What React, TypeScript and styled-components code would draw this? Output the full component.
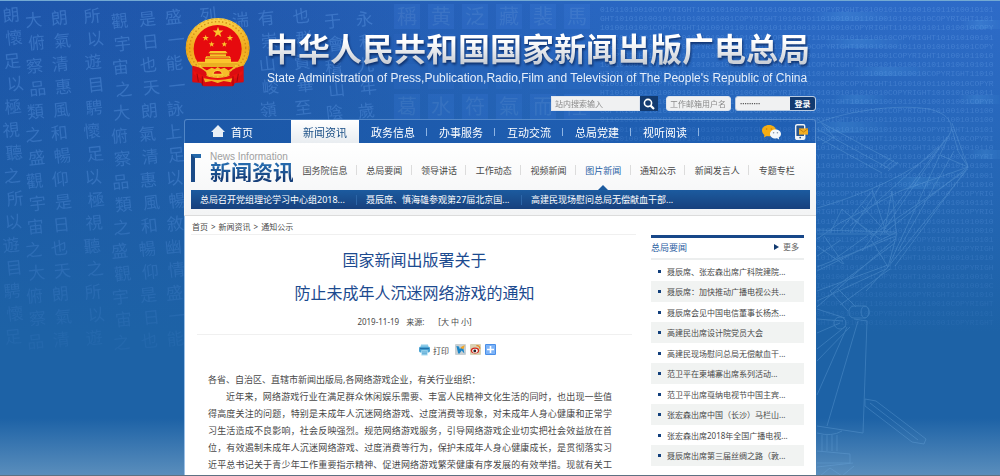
import React from "react";
import styled, { createGlobalStyle, css } from "styled-components";

const GlobalStyle = createGlobalStyle`
  * { box-sizing: border-box; }
  body {
    margin: 0;
    font-family: "Noto Sans", "Noto Sans CJK SC", sans-serif;
    font-size: 9px;
    color: #484848;
  }
  a { color: inherit; text-decoration: none; }
  ul { list-style: none; margin: 0; padding: 0; }
  h1, h2, p { margin: 0; font-weight: 400; }
  button, input { font-family: inherit; margin: 0; }
`;

const Page = styled.div`
  position: relative;
  min-height: 100vh;
  display: flex;
  flex-direction: column;
  border-top: 1px solid #73a9d3;
  border-bottom: 1px solid #5d7183;
  background:
    linear-gradient(to bottom, transparent 88%, rgba(150, 185, 210, 0.5) 100%),
    linear-gradient(to bottom, rgba(28, 98, 164, 0) 0%, rgba(28, 98, 164, 0.55) 40%, #1d62a6 70%),
    linear-gradient(to right, #1d55aa 0%, #2259ae 25%, #2a68c4 65%, #2e6bc8 100%);
`;

const Backdrop = styled.svg`
  position: absolute;
  inset: 0;
  width: 100%;
  height: 100%;
  pointer-events: none;
`;

const Site = styled.div`
  position: relative;
  flex: 1;
  width: 100%;
  max-width: 632px;
  margin: 0 auto;
  display: flex;
  flex-direction: column;
`;

const Header = styled.header`
  padding-top: 16px;
`;

const Brand = styled.div`
  display: flex;
  gap: 15px;
  height: 79px;
  padding-left: 1px;
`;

const Emblem = styled.svg`
  width: 66px;
  height: 70px;
  flex: none;
`;

const BrandText = styled.div`
  padding-top: 12px;
  white-space: nowrap;
`;

const SiteTitle = styled.div`
  font-size: 32px;
  line-height: 40px;
  font-weight: 700;
  color: transparent;
  background: linear-gradient(to bottom, #fff 30%, #c9ced6 85%);
  background-clip: text;
  -webkit-background-clip: text;
  filter: drop-shadow(1px 2px 1px rgba(5, 30, 80, 0.7));
`;

const SiteSubtitle = styled.div`
  padding-left: 1px;
  font-family: "Liberation Sans", Arial, sans-serif;
  font-size: 12px;
  line-height: 18px;
  color: #e6effa;
`;

const Tools = styled.div`
  display: flex;
  justify-content: flex-end;
  gap: 8px;
  height: 15px;
`;

const SearchForm = styled.form`
  display: flex;
`;

const LoginForm = styled.form`
  display: flex;
  gap: 4px;
`;

const Field = styled.input<{ $width: number; $round?: boolean }>`
  width: ${(p) => p.$width}px;
  height: 15px;
  padding: 0 3px;
  border: 1px solid #dfe5ee;
  border-radius: ${(p) => (p.$round ? 3 : 0)}px;
  background: #f0f1f2;
  color: #888;
  font-size: 8px;
  outline: none;
  &::placeholder { color: #8a8a8a; opacity: 1; }
`;

const PasswordBox = styled.div`
  display: flex;
  border: 1px solid #b9cbe2;
  border-radius: 3px;
  overflow: hidden;
  background: #f0f1f2;
  height: 15px;
`;

const PasswordField = styled.input`
  width: 54px;
  padding: 0 4px;
  border: 0;
  background: transparent;
  color: #555;
  font-size: 6px;
  outline: none;
`;

const ToolButton = styled.button<{ $width: number }>`
  display: flex;
  align-items: center;
  justify-content: center;
  width: ${(p) => p.$width}px;
  padding: 0;
  border: 0;
  background: #123a70;
  color: #fff;
  font-size: 8px;
  font-weight: 700;
  line-height: 13px;
`;

const MainNav = styled.nav`
  display: flex;
  align-items: center;
  height: 24px;
  margin-top: 8px;
  border: 1px solid rgba(150, 190, 235, 0.45);
  border-bottom: 0;
  border-radius: 3px 3px 0 0;
  background: rgba(20, 80, 165, 0.3);
  color: #fff;
  font-size: 11px;
`;

const HomeLink = styled.a`
  display: flex;
  align-items: center;
  gap: 6px;
  width: 106px;
  padding-left: 26px;
`;

const NavLink = styled.a<{ $active?: boolean }>`
  display: flex;
  align-items: center;
  justify-content: center;
  width: 68px;
  height: 23px;
  &::after {
    content: "";
    width: 1px;
    height: 8px;
    margin-left: 11px;
    margin-right: -12px;
    background: #8db4e4;
  }
  ${(p) =>
    p.$active &&
    css`
      background: linear-gradient(to bottom, #fff, #e9edf1);
      color: #1c5087;
      &::after { display: none; }
    `}
`;

const NavIcons = styled.div`
  display: flex;
  align-items: center;
  gap: 14px;
  margin-left: auto;
  padding-right: 7px;
`;

const IconLink = styled.a`
  display: flex;
`;

const Section = styled.section`
  padding: 0 6px 6px 7px;
  background: linear-gradient(to bottom, #fff, #f3f4f5);
  border-bottom: 1px solid #dcdcdc;
`;

const SectionTop = styled.div`
  display: flex;
  height: 47px;
`;

const SectionMark = styled.div`
  width: 10px;
  height: 28px;
  margin-top: 11px;
  border-left: 4px solid #1b4b88;
  border-top: 4px solid #2569ab;
`;

const SectionName = styled.div`
  width: 92px;
  padding: 9px 0 0 9px;
  white-space: nowrap;
`;

const SectionEnglish = styled.div`
  font-family: "Liberation Sans", Arial, sans-serif;
  font-size: 10px;
  line-height: 10px;
  color: #a0a0a0;
`;

const SectionTitle = styled.h2`
  font-size: 21px;
  line-height: 20px;
  font-weight: 700;
  color: transparent;
  background: linear-gradient(to bottom, #2468ab 20%, #163f7a 80%);
  background-clip: text;
  -webkit-background-clip: text;
`;

const SubNav = styled.nav`
  display: flex;
  flex: 1;
  margin-right: 6px;
  padding-top: 7px;
`;

const SubLink = styled.a<{ $active?: boolean }>`
  position: relative;
  display: flex;
  align-items: center;
  justify-content: center;
  flex: 1 1 auto;
  padding: 0 9px;
  white-space: nowrap;
  color: ${(p) => (p.$active ? "#2a62a5" : "#484848")};
  &:not(:last-child)::after {
    content: "";
    position: absolute;
    right: 0;
    top: 15px;
    width: 1px;
    height: 10px;
    background: #dcdcdc;
  }
  ${(p) =>
    p.$active &&
    css`
      &::before {
        content: "";
        position: absolute;
        bottom: 0;
        left: 50%;
        margin-left: -5px;
        border: 5px solid transparent;
        border-top: 0;
        border-bottom-color: #1c5b9f;
      }
    `}
`;

const Headlines = styled.ul`
  display: grid;
  grid-template-columns: repeat(3, 165px);
  align-items: center;
  height: 19px;
  background: linear-gradient(to bottom, #1c5b9f, #17407d);
  color: #fff;
`;

const Headline = styled.li`
  padding-left: 9px;
  line-height: 10px;
  white-space: nowrap;
  & + & { border-left: 1px solid #2d66a8; }
`;

const Content = styled.div`
  display: flex;
  gap: 15px;
  flex: 1;
  padding: 0 12px 0 6px;
  background: #fff;
  border-left: 1px solid #9cc0e6;
`;

const MainColumn = styled.main`
  flex: 1;
  min-width: 0;
`;

const Breadcrumb = styled.nav`
  height: 19px;
  padding-left: 1px;
  line-height: 22px;
  font-size: 8px;
  border-bottom: 1px solid #f0f0f0;
`;

const Crumb = styled.a`
  & + &::before { content: ">"; margin: 0 3px; }
`;

const ArticleHead = styled.div`
  margin: 0 4px 0 6px;
  padding-top: 9px;
  text-align: center;
  border-bottom: 1px solid #f0f0f0;
`;

const ArticleTitle = styled.h1`
  font-size: 16px;
  line-height: 33px;
  color: #1c4a8f;
`;

const Meta = styled.div`
  display: flex;
  justify-content: center;
  gap: 7px;
  height: 24px;
  line-height: 24px;
  font-size: 8px;
`;

const SizeSwitch = styled.span`
  display: flex;
  gap: 2px;
  margin-left: 7px;
`;

const Share = styled.div`
  display: flex;
  align-items: center;
  gap: 4px;
  height: 28px;
  padding-left: 228px;
`;

const PrintButton = styled.button`
  display: flex;
  align-items: center;
  gap: 3px;
  margin-right: 2px;
  padding: 2px 0 0;
  border: 0;
  background: none;
  color: #484848;
  font-size: 8px;
`;

const ArticleBody = styled.div`
  width: 404px;
  margin: 8px 0 0 17px;
  line-height: 17px;
`;

const Lead = styled.p``;

const Paragraph = styled.p`
  text-indent: 2em;
  text-align: justify;
  text-align-last: justify;
`;

const Sidebar = styled.aside`
  width: 153px;
  margin-top: 19px;
  border-top: 3px solid #174789;
`;

const SideHead = styled.div`
  display: flex;
  justify-content: space-between;
  height: 22px;
  padding-right: 5px;
  border-bottom: 2px solid #eceeee;
`;

const SideTitle = styled.h2`
  font-size: 9px;
  line-height: 19px;
  color: #2a5c9f;
`;

const MoreLink = styled.a`
  display: flex;
  align-items: center;
  gap: 4px;
  height: 17px;
  font-size: 8px;
  color: #666;
  &::before {
    content: "";
    border: 3px solid transparent;
    border-left: 5px solid #123a70;
    border-right: 0;
  }
`;

const NewsList = styled.ul`
  padding-top: 1px;
`;

const NewsItem = styled.li`
  display: flex;
  align-items: center;
  gap: 6px;
  height: 20px;
  padding-left: 7px;
  font-size: 8px;
  white-space: nowrap;
  &::before {
    content: "";
    width: 3px;
    height: 3px;
    background: #123f7c;
  }
  &:nth-child(even) {
    height: 21px;
    background: #f1f3f2;
  }
`;

const calligraphy = [
  { x: 13, text: "朗懷足以極視聽之所以遊目騁懷足" },
  { x: 35, text: "大俯察品類之盛觀宇宙之大俯察品" },
  { x: 61, text: "朗氣清惠風和暢仰是日也天朗氣清" },
  { x: 94, text: "所以遊目騁懷足以極視聽之所以遊" },
  { x: 121, text: "觀宇宙之大俯察品類之盛觀宇宙之" },
  { x: 149, text: "是日也天朗氣清惠風和暢仰是日也" },
  { x: 175, text: "盛一能一詠上足以暢敘幽情盛一能" },
  { x: 210, text: "列" },
  { x: 242, text: "湍" },
  { x: 268, text: "有崇山峻嶺" },
  { x: 303, text: "也群賢畢至" },
  { x: 334, text: "于會稽山陰" },
  { x: 366, text: "永和九年歲" },
];

const sealRows = ["稱黄泛藏裴馬", "      ", "      ", "葛水符氣而陸"];

const star = (cx: number, cy: number, r: number) =>
  Array.from({ length: 10 }, (_, i) => {
    const a = -Math.PI / 2 + (i * Math.PI) / 5;
    const d = i % 2 ? r * 0.4 : r;
    return `${cx + d * Math.cos(a)},${cy + d * Math.sin(a)}`;
  }).join(" ");

const codeText = "01011010010COPYRIGHT1010101001011010100101001COPYRIGHT10100101101001010110100101010010COPYRIGHT110101";
const codeRows = Array.from({ length: 35 }, (_, i) => {
  const shift = (i * 17) % codeText.length;
  return (codeText + codeText).slice(shift, shift + 82);
});

function BackdropArt() {
  return (
    <Backdrop viewBox="0 0 1000 476" preserveAspectRatio="xMidYMin slice" aria-hidden="true">
      <defs>
        <linearGradient id="fade" x1="0" y1="0" x2="0" y2="1">
          <stop offset="0" stopColor="#fff" />
          <stop offset="0.4" stopColor="#fff" stopOpacity="0.8" />
          <stop offset="0.85" stopColor="#fff" stopOpacity="0" />
        </linearGradient>
        <mask id="fadeMask" maskUnits="userSpaceOnUse" x="0" y="0" width="1000" height="476">
          <rect width="1000" height="476" fill="url(#fade)" />
        </mask>
        <linearGradient id="glow" x1="0" y1="0" x2="1" y2="0">
          <stop offset="0" stopColor="#62b0ee" stopOpacity="0" />
          <stop offset="0.4" stopColor="#62b0ee" />
          <stop offset="1" stopColor="#62b0ee" stopOpacity="0" />
        </linearGradient>
      </defs>
      <g mask="url(#fadeMask)">
        <g fill="#5c96e2" opacity="0.45" fontSize="17" fontFamily="'Noto Sans CJK TC', sans-serif" textAnchor="middle">
          {calligraphy.map((c, n) =>
            Array.from(c.text).map((ch, i) => (
              <text key={`${n}-${i}`} x={c.x + ((i * 3) % 5) - 2} y={20 + i * 23 + ((n * 5) % 7)} transform={`rotate(-6 ${c.x} ${14 + i * 23})`}>
                {ch}
              </text>
            ))
          )}
        </g>
        <g fontSize="20" fontFamily="'Noto Sans CJK TC', sans-serif" textAnchor="middle">
          {sealRows.map((row, r) =>
            Array.from(row).map((ch, i) => (
              <g key={`${r}-${i}`} opacity={r === 1 || r === 2 ? 0.12 : 0.24}>
                <rect x={394 + i * 34} y={3 + r * 30} width="26" height="25" fill="#3f7fdb" />
                {ch !== " " && <text x={407 + i * 34} y={23 + r * 30} fill="#7fb0f0">{ch}</text>}
              </g>
            ))
          )}
        </g>
        <g fill="#6fa6ec" opacity="0.36" fontSize="8" fontFamily="'Liberation Mono', monospace">
          {codeRows.map((row, i) => (
            <text key={i} x={600} y={11 + i * 9.2}>{row}</text>
          ))}
        </g>
        <g fill="url(#glow)" opacity="0.22">
          <rect x="810" y="11" width="88" height="9" />
          <rect x="822" y="38" width="88" height="9" />
          <rect x="850" y="66" width="86" height="9" />
          <rect x="832" y="94" width="60" height="9" />
          <rect x="957" y="94" width="50" height="9" />
          <rect x="810" y="121" width="84" height="11" />
          <rect x="965" y="149" width="50" height="9" />
          <rect x="890" y="176" width="66" height="12" />
          <rect x="960" y="19" width="50" height="9" />
        </g>
      </g>
      <g fill="none" stroke="#76b0e4" strokeWidth="1" opacity="0.3">
        <path d="M817 122C850 109 900 103 928 108C950 112 958 126 945 140C925 166 870 192 817 207" />
        <path d="M817 128L890 168M817 136L882 172M822 122L898 163M880 166l10-9M884 168l10-9M888 170l10-9M817 117l18 20M822 143l14-8" />
        <path d="M952 122L968 166L895 265M952 128L958 150L968 166M940 154L968 166M950 132L890 262M947 136L880 235M944 140L862 250M938 146L850 225M954 150L898 250M968 166L884 232M968 168L870 236M968 166L900 190L840 222L817 238M966 170L888 266L866 290" />
        <path d="M817 229L897 231M817 233L897 233M897 231L817 270M896 235L817 266M895 238L817 306M895 242L830 290M897 232L888 266M888 264L817 290M886 268L817 300M890 268L840 304M872 240l16 26M872 188L885 228L892 190L896 230M872 190L840 230M880 185L850 232M842 208l30 26M842 208L830 232M850 216l30 22M817 245l26 18M817 255l24-16M824 235l20 28M868 234L832 260M862 205l28 30" />
        <path d="M817 308L845 317M817 318L843 320M817 332L840 322M817 348L846 325M817 360L850 326M830 290L848 310M838 288L856 306" />
        <rect x="849" y="305" width="20" height="12" rx="5" />
        <ellipse cx="865" cy="311" rx="4" ry="6" />
        <circle cx="840" cy="322" r="6" />
        <path d="M854 318L867 320L863 432M858 320L827 425M847 326L817 394M817 425L863 432M817 432Q832 436 842 430M822 434v16M827 434v16M832 434v16M837 434v16M817 450L850 453V462H817M817 466l36-4M820 475l10-8l12 8l12-10" />
        <path d="M865 398L876 400L926 438L924 443L912 441L865 405ZM870 402L918 439" />
      </g>
    </Backdrop>
  );
}

function NationalEmblem() {
  return (
    <Emblem viewBox="0 0 198 210" role="img" aria-label="国徽">
      <defs>
        <linearGradient id="gold" x1="0" y1="0" x2="0" y2="1">
          <stop offset="0" stopColor="#fbd34a" />
          <stop offset="0.5" stopColor="#f0a91c" />
          <stop offset="1" stopColor="#f7c733" />
        </linearGradient>
      </defs>
      <path d="M28 150L170 150L176 196L150 198L144 208H56L48 198L22 196Z" fill="#d90b10" />
      <ellipse cx="98" cy="93" rx="96" ry="90" fill="url(#gold)" />
      <ellipse cx="98" cy="93" rx="84" ry="79" fill="none" stroke="#d08a12" strokeWidth="4" strokeDasharray="4 7" />
      <ellipse cx="98" cy="93" rx="93" ry="87" fill="none" stroke="#d8930f" strokeWidth="2" strokeDasharray="8 5" />
      <circle cx="98" cy="96" r="72" fill="#e60a0e" />
      <g fill="#fbc62c">
        <polygon points={star(99, 46, 17)} />
        <polygon points={star(62, 63, 10)} />
        <polygon points={star(135, 63, 10)} />
        <polygon points={star(80, 82, 9)} />
        <polygon points={star(118, 82, 9)} />
        <path d="M70 109L76 102H122L128 109ZM75 110h48v7h-48ZM64 118h70l4 6H60ZM60 125h78v9H60ZM38 134H160L154 150H44Z" />
      </g>
      <path d="M40 141H158M66 121H132M74 112h50M48 147h102" stroke="#c98110" strokeWidth="2" />
      <path d="M22 146Q50 150 66 168L60 196L22 192ZM176 146Q148 150 132 168L138 196L176 192Z" fill="#dc0c11" />
      <path d="M66 160L80 152L90 156L98 150L107 156L118 152L130 160L134 170Q98 182 64 170Z" fill="#f6bd28" />
      <path d="M84 172a14 12 0 0 1 28 0Z" fill="#dd1010" stroke="#f8cd3c" strokeWidth="4" />
      <path d="M24 160Q52 182 98 184Q146 182 174 160L172 172Q146 194 98 196Q52 194 26 172Z" fill="#e8110f" />
      <path d="M56 184Q98 194 142 184L138 196L116 192L98 198L80 192L60 196Z" fill="#f3b524" />
      <path d="M52 178V206M144 178V206M36 170l4 24M160 170l-4 24" stroke="#9f070b" strokeWidth="3" />
    </Emblem>
  );
}

const HomeIcon = () => (
  <svg width="14" height="13" viewBox="0 0 14 13" aria-hidden="true">
    <path d="M7 0L14 7H12V12H2V7H0Z" fill="#e9eff6" />
  </svg>
);

const SearchIcon = () => (
  <svg width="12" height="12" viewBox="0 0 12 12" fill="none" stroke="#fff" aria-hidden="true">
    <circle cx="5" cy="5" r="3.6" strokeWidth="1.6" />
    <path d="M7.6 7.6L11 11" strokeWidth="2.2" />
  </svg>
);

const WechatIcon = () => (
  <svg width="19" height="16" viewBox="0 0 19 16" aria-hidden="true">
    <path d="M7 1C3 1 0 3.4 0 6.6C0 8.4 1 10 2.4 11L2 13.4L4.6 12Q6 12.4 8 12.2C11.6 11.8 14 9.6 14 6.6C14 3.4 11 1 7 1Z" fill="#f5ad14" />
    <circle cx="4.6" cy="5" r="0.8" fill="#c98408" />
    <circle cx="9.4" cy="5" r="0.8" fill="#c98408" />
    <path d="M13.4 5.4C10.3 5.4 8 7.3 8 9.9S10.3 14.4 13.4 14.4L15 14.2L17.2 15.4L16.8 13.4C18.2 12.6 19 11.4 19 9.9C19 7.3 16.6 5.4 13.4 5.4Z" fill="#f4f7fb" />
    <circle cx="11.6" cy="8.8" r="0.8" fill="#8593a3" />
    <circle cx="15.4" cy="8.8" r="0.8" fill="#8593a3" />
  </svg>
);

const PhoneIcon = () => (
  <svg width="13" height="16" viewBox="0 0 13 16" aria-hidden="true">
    <rect x="0.7" y="0.7" width="9" height="14.6" rx="1.4" fill="#28558f" stroke="#eef3f8" strokeWidth="1.4" />
    <rect x="1" y="12" width="8.4" height="3" fill="#eef3f8" />
    <circle cx="5.2" cy="13.6" r="0.9" fill="#28558f" />
    <rect x="4" y="4.4" width="9" height="6.2" fill="#f3ae24" />
    <path d="M4 4.8L8.5 8L13 4.8" stroke="#b87508" fill="none" strokeWidth="0.8" />
  </svg>
);

const PrintIcon = () => (
  <svg width="11" height="12" viewBox="0 0 11 12" aria-hidden="true">
    <path d="M2 0.5H9L9.6 3.4H1.4Z" fill="#8ccbe9" />
    <rect x="0" y="2.8" width="11" height="5.6" rx="1.4" fill="#4aa3d3" />
    <path d="M1 4.6H10" stroke="#1f6ea6" />
    <path d="M2.2 6.2H8.8L8.6 11.6H2.4Z" fill="#a9dcf2" />
    <path d="M3 8H8M3 9.8H8" stroke="#3b93c6" strokeWidth="0.8" />
  </svg>
);

const TencentIcon = () => (
  <svg width="11" height="11" viewBox="0 0 11 11" aria-hidden="true">
    <rect width="11" height="11" rx="1" fill="#c9d0d3" />
    <path d="M1.4 2L4 2.6L4.8 5L8 2.4L9.4 9.4L6.6 6.6L4.6 9.6L3.2 9.4Z" fill="#1c86c8" />
    <path d="M5.4 3.8L7 2.6L9.8 1L8.8 4.4L7.4 5Z" fill="#f4a526" />
  </svg>
);

const WeiboIcon = () => (
  <svg width="11" height="11" viewBox="0 0 11 11" aria-hidden="true">
    <rect width="11" height="11" rx="1" fill="#d9d2b4" />
    <ellipse cx="5" cy="6.6" rx="4.2" ry="3" fill="#d3281c" />
    <ellipse cx="5" cy="6.8" rx="2.8" ry="2" fill="#fff" />
    <circle cx="4.8" cy="6.9" r="1.4" fill="#222" />
    <path d="M6.4 1.6Q9.8 1.2 9.8 4.8" stroke="#e8862a" strokeWidth="1.2" fill="none" />
  </svg>
);

const PlusIcon = () => (
  <svg width="11" height="11" viewBox="0 0 11 11" aria-hidden="true">
    <rect width="11" height="11" rx="1" fill="#4a8fe8" />
    <rect x="1" y="1" width="9" height="9" fill="#7db3f7" />
    <path d="M5.5 2V9M2 5.5H9" stroke="#fff" strokeWidth="1.6" />
  </svg>
);

const navItems = ["新闻资讯", "政务信息", "办事服务", "互动交流", "总局党建", "视听阅读"];
const subItems = ["国务院信息", "总局要闻", "领导讲话", "工作动态", "视频新闻", "图片新闻", "通知公示", "新闻发言人", "专题专栏"];
const headlines = ["总局召开党组理论学习中心组2018...", "聂辰席、慎海雄参观第27届北京国...", "高建民现场慰问总局无偿献血干部..."];
const news = [
  "聂辰席、张宏森出席广科院建院...",
  "聂辰席：加快推动广播电视公共...",
  "聂辰席会见中国电信董事长杨杰...",
  "高建民出席设计院党员大会",
  "高建民现场慰问总局无偿献血干...",
  "范卫平在柬埔寨出席系列活动...",
  "范卫平出席戛纳电视节中国主宾...",
  "张宏森出席中国（长沙）马栏山...",
  "张宏森出席2018年全国广播电视...",
  "聂辰席出席第三届丝绸之路（敦...",
];

export default function App() {
  return (
    <Page lang="zh-CN">
      <GlobalStyle />
      <BackdropArt />
      <Site>
        <Header>
          <Brand>
            <NationalEmblem />
            <BrandText>
              <SiteTitle>中华人民共和国国家新闻出版广电总局</SiteTitle>
              <SiteSubtitle>
                State Administration of Press,Publication,Radio,Film and Television of The People's Republic of China
              </SiteSubtitle>
            </BrandText>
          </Brand>
          <Tools>
            <SearchForm onSubmit={(e) => e.preventDefault()}>
              <Field $width={89} placeholder="站内搜索输入" aria-label="站内搜索" />
              <ToolButton $width={18} aria-label="搜索"><SearchIcon /></ToolButton>
            </SearchForm>
            <LoginForm onSubmit={(e) => e.preventDefault()}>
              <Field $width={65} $round placeholder="工作邮箱用户名" aria-label="工作邮箱用户名" />
              <PasswordBox>
                <PasswordField type="password" defaultValue="123456789" aria-label="密码" />
                <ToolButton $width={25}>登录</ToolButton>
              </PasswordBox>
            </LoginForm>
          </Tools>
          <MainNav>
            <HomeLink href="#"><HomeIcon />首页</HomeLink>
            {navItems.map((t, i) => (
              <NavLink key={t} href="#" $active={i === 0}>{t}</NavLink>
            ))}
            <NavIcons>
              <IconLink href="#" aria-label="微信"><WechatIcon /></IconLink>
              <IconLink href="#" aria-label="手机版"><PhoneIcon /></IconLink>
            </NavIcons>
          </MainNav>
        </Header>
        <Section>
          <SectionTop>
            <SectionMark />
            <SectionName>
              <SectionEnglish>News Information</SectionEnglish>
              <SectionTitle>新闻资讯</SectionTitle>
            </SectionName>
            <SubNav>
              {subItems.map((t) => (
                <SubLink key={t} href="#" $active={t === "图片新闻"}>{t}</SubLink>
              ))}
            </SubNav>
          </SectionTop>
          <Headlines>
            {headlines.map((t) => (
              <Headline key={t}><a href="#">{t}</a></Headline>
            ))}
          </Headlines>
        </Section>
        <Content>
          <MainColumn>
            <Breadcrumb>
              <Crumb href="#">首页</Crumb>
              <Crumb href="#">新闻资讯</Crumb>
              <Crumb href="#">通知公示</Crumb>
            </Breadcrumb>
            <ArticleHead>
              <ArticleTitle>
                国家新闻出版署关于
                <br />
                防止未成年人沉迷网络游戏的通知
              </ArticleTitle>
              <Meta>
                <span>2019-11-19</span>
                <span>来源:</span>
                <SizeSwitch>
                  <a href="#">[大</a>
                  <a href="#">中</a>
                  <a href="#">小]</a>
                </SizeSwitch>
              </Meta>
            </ArticleHead>
            <Share>
              <PrintButton><PrintIcon />打印</PrintButton>
              <IconLink href="#" aria-label="腾讯微博"><TencentIcon /></IconLink>
              <IconLink href="#" aria-label="新浪微博"><WeiboIcon /></IconLink>
              <IconLink href="#" aria-label="更多分享"><PlusIcon /></IconLink>
            </Share>
            <ArticleBody>
              <Lead>各省、自治区、直辖市新闻出版局,各网络游戏企业，有关行业组织：</Lead>
              <Paragraph>
                近年来，网络游戏行业在满足群众休闲娱乐需要、丰富人民精神文化生活的同时，也出现一些值得高度关注的问题，特别是未成年人沉迷网络游戏、过度消费等现象，对未成年人身心健康和正常学习生活造成不良影响，社会反映强烈。规范网络游戏服务，引导网络游戏企业切实把社会效益放在首位，有效遏制未成年人沉迷网络游戏、过度消费等行为，保护未成年人身心健康成长，是贯彻落实习近平总书记关于青少年工作重要指示精神、促进网络游戏繁荣健康有序发展的有效举措。现就有关工
              </Paragraph>
            </ArticleBody>
          </MainColumn>
          <Sidebar>
            <SideHead>
              <SideTitle>总局要闻</SideTitle>
              <MoreLink href="#">更多</MoreLink>
            </SideHead>
            <NewsList>
              {news.map((t) => (
                <NewsItem key={t}><a href="#">{t}</a></NewsItem>
              ))}
            </NewsList>
          </Sidebar>
        </Content>
      </Site>
    </Page>
  );
}
